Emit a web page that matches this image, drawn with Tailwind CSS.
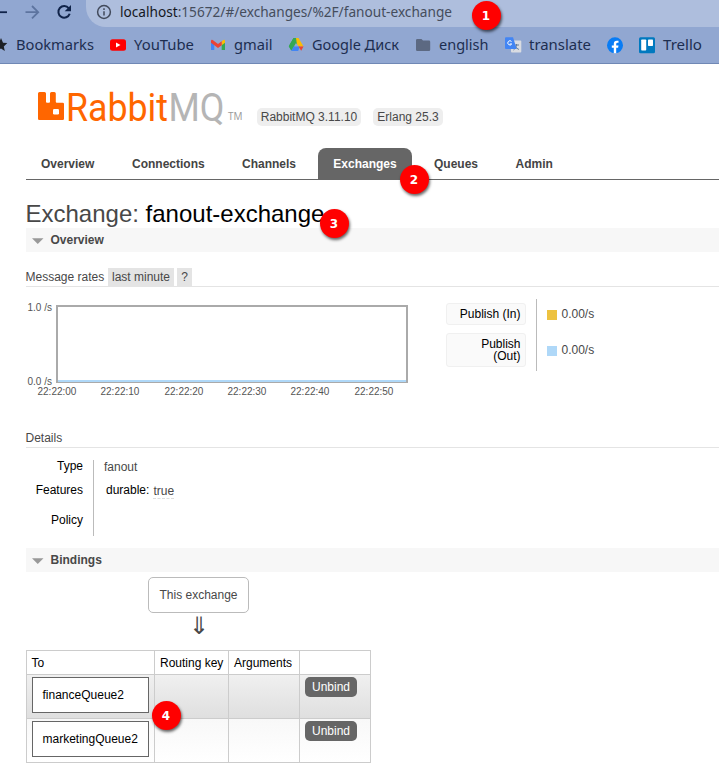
<!DOCTYPE html>
<html lang="en">
<head>
<meta charset="utf-8">
<title>RabbitMQ Management</title>
<script src="https://cdn.jsdelivr.net/npm/@tailwindcss/browser@4"></script>
</head>
<body class="relative h-[776px] w-[719px] overflow-hidden bg-white font-['Liberation_Sans',Arial,sans-serif] text-[12px] leading-[14px] text-[#484848]">
<!-- Browser chrome -->
<header class="h-16 border-b border-[#7088b5] bg-[#91a7d1] font-['Noto_Sans','Open_Sans',sans-serif] text-[#1d2e50]">
  <div class="flex h-[27px]">
    <svg class="h-[27px] w-[86px] shrink-0" viewBox="0 0 86 27" fill="none" stroke-width="1.8">
      <path d="M-6 12.2H7" stroke="#102349"/>
      <path d="M25.5 12.2H38M32 6l6.2 6.2L32 18.4" stroke="#5d749f"/>
      <path d="M68.8 8.3A5.8 5.8 0 1 0 69.7 13.7" stroke="#102349" stroke-width="2"/>
      <path d="M71 5v6.3h-6.3z" fill="#102349"/>
    </svg>
    <div class="flex h-[27px] flex-1 items-start rounded-bl-[20px] bg-[#aebedd]">
      <svg class="mt-[4px] ml-[10px] h-4 w-4" viewBox="0 0 16 16" fill="none" stroke="#424a5b" stroke-width="1.5"><circle cx="8" cy="8" r="6.4"/><path d="M8 7.2v4.2M8 4.3v1.6"/></svg>
      <svg class="h-[27px] w-[340px] ml-2" viewBox="0 0 340 27"><text x="0" y="17.3" font-size="14" textLength="332" lengthAdjust="spacingAndGlyphs" fill="#454d5c"><tspan fill="#15181f">localhost</tspan>:15672/#/exchanges/%2F/fanout-exchange</text></svg>
    </div>
  </div>
  <svg class="h-9 w-[719px]" viewBox="0 27 719 36" font-size="14" fill="#1d2e50">
    <path d="M1 38l2 4.8 4.3.3-3.5 3.3 1 4.6L1 48.5-4 51v-8h3z" fill="#1d2025"/>
    <g>
      <text x="16" y="50" textLength="78" lengthAdjust="spacingAndGlyphs">Bookmarks</text>
      <text x="134" y="50" textLength="60" lengthAdjust="spacingAndGlyphs">YouTube</text>
      <text x="234" y="50" textLength="38.500" lengthAdjust="spacingAndGlyphs">gmail</text>
      <text x="312" y="50" textLength="87" lengthAdjust="spacingAndGlyphs">Google Диск</text>
      <text x="439" y="50" textLength="49.500" lengthAdjust="spacingAndGlyphs">english</text>
      <text x="529" y="50" textLength="62" lengthAdjust="spacingAndGlyphs">translate</text>
      <text x="663" y="50" textLength="39" lengthAdjust="spacingAndGlyphs">Trello</text>
    </g>
    <rect x="110" y="39.300" width="16" height="11.500" rx="2.500" fill="#f00"/><path d="M116 42.500v5l4.500-2.500z" fill="#fff"/>
    <path d="M211 41v9h3.300v-6z" fill="#4285f4"/><path d="M225 41v9h-3.300v-6z" fill="#34a853"/><path d="M221.700 41.200L223.400 40q1.600-.7 1.600 1.200v1.600l-3.300 2.400z" fill="#fbbc04"/><path d="M211 42.800v-1.600q0-1.900 1.700-1.200l5.300 4 3.700-2.800v4l-3.700 2.900z" fill="#ea4335"/>
    <path d="M293.500 38h5l-7.200 12.500-2.500-4.200z" fill="#34a853"/><path d="M293.500 38h5l5 8.500h-5z" fill="#fbbc04"/><path d="M293.500 38h2.500l.8 5.500-5.500 7-2.500-4.200z" fill="#34a853"/><path d="M296 43l2.200 3.500h-4.300z" fill="#91a7d1"/><path d="M293.600 46.500h6l-1.400 4.500h-7z" fill="#4285f4"/><path d="M298.500 46.500h5l-2.300 4.300z" fill="#ea4335"/>
    <path d="M416 40.200q0-1.200 1.200-1.200h4.300l1.500 1.500h6q1.200 0 1.200 1.200v8.100q0 1.200-1.200 1.200h-11.800q-1.200 0-1.200-1.200z" fill="#5c6982"/>
    <rect x="511" y="40.500" width="10.300" height="12" rx="1" fill="#d9dce2"/><path d="M514 45h5M516.500 44v1c0 2-1.500 4-3 5M515 46c1 2 3 3 4 3.500" stroke="#667c98" fill="none"/><path d="M506 37.300h7l3.700 11.700H506q-1 0-1-1V38.300q0-1 1-1z" fill="#4285f4"/><path d="M511.500 41.500a2.100 2.100 0 1 0 .2 2.500h-1.900" fill="none" stroke="#fff"/>
    <circle cx="615" cy="45.300" r="8" fill="#087cf5"/><path d="M613.800 53.300v-5.600h-2v-2.300h2v-1.700q0-3 3-3h1.700v2.100h-1.100q-1.200 0-1.200 1.200v1.400h2.300l-.4 2.300h-1.900v5.600z" fill="#fff"/>
    <rect x="639" y="37.300" width="16" height="16" rx="1.500" fill="#0079bf"/><rect x="641.200" y="39.500" width="5" height="11" rx=".7" fill="#fff"/><rect x="648" y="39.500" width="5" height="6.500" rx=".7" fill="#fff"/>
  </svg>
</header>

<main class="ml-[26px]">
  <!-- Logo and versions -->
  <div class="flex h-[84px] pt-[24px]">
    <svg class="h-10 w-[231px] shrink-0" viewBox="26 88 231 40">
      <path d="M39.500 92h5q1.500 0 1.500 1.500v8.300q0 1 1 1h2q1 0 1-1v-8.300q0-1.500 1.500-1.500h2.800q1.500 0 1.500 1.500v8.300q0 1 1 1h6q1.200 0 1.200 1.200v14.800q0 1.200-1.200 1.200H39.300q-1.300 0-1.300-1.200V93.500q0-1.500 1.500-1.500z" fill="#f60"/>
      <rect x="53" y="109" width="6" height="5.500" rx="1.200" fill="#fff"/>
      <text x="66" y="120.500" font-family="Roboto,'Open Sans',sans-serif" font-size="38.500" textLength="102" lengthAdjust="spacingAndGlyphs" fill="#f60">Rabbit</text>
      <text x="168.500" y="120.500" font-family="Roboto,'Open Sans',sans-serif" font-size="38.500" textLength="56" lengthAdjust="spacingAndGlyphs" fill="#b5b5b5">MQ</text>
      <text x="228" y="120.300" font-family="'Open Sans',sans-serif" font-size="10" textLength="14.500" lengthAdjust="spacingAndGlyphs" fill="#999">TM</text>
    </svg>
    <div class="flex items-start gap-3 pt-5">
      <span class="h-[18px] w-[104px] rounded-[5px] bg-[#eee] pt-0.5 text-center whitespace-nowrap">RabbitMQ 3.11.10</span>
      <span class="h-[18px] w-[70px] rounded-[5px] bg-[#eee] pt-0.5 text-center whitespace-nowrap">Erlang 25.3</span>
    </div>
  </div>
  <nav class="flex h-8 border-b border-[#666] font-bold text-[#444]">
    <a class="w-[91px] pt-[9px] pl-[15px]">Overview</a>
    <a class="w-[110px] pt-[9px] pl-[15px]">Connections</a>
    <a class="w-[91px] pt-[9px] pl-[15px]">Channels</a>
    <a class="w-[94px] rounded-t-[8px] bg-[#666] pt-[9px] text-center text-white">Exchanges</a>
    <a class="w-[88px] pt-[9px] pl-[22px]">Queues</a>
    <a class="pt-[9px] pl-[15.500px]">Admin</a>
  </nav>
  <h1 class="-ml-[0.500px] h-12 pt-5 text-[24px] leading-7 whitespace-nowrap">Exchange: <span class="text-black">fanout-exchange</span></h1>

  <h2 class="flex h-6 items-center gap-[7px] bg-[#f7f7f7] pl-1.5 font-bold"><svg class="mt-px h-1.5 w-[11.500px]" viewBox="0 0 12 6"><path d="M0 0h12L6 6z" fill="#999"/></svg>Overview</h2>
  <h3 class="mt-4 flex h-[19px] border-b border-[#e4e4e4] leading-[18px]">
    <span class="-ml-[0.500px] w-[82.500px]">Message rates</span><span class="w-[66px] bg-[#e4e4e4] text-center">last minute</span><span class="ml-[3px] w-[15px] bg-[#e4e4e4] text-center">?</span>
  </h3>

  <div class="flex h-[143px]">
    <div class="w-[420px] pt-[18px] text-[10px] leading-3 text-[#545454]">
      <div class="flex h-[78px]">
        <div class="-mt-[3px] flex h-[86px] w-[30px] flex-col justify-between pr-1 text-right whitespace-nowrap"><span>1.0 /s</span><span>0.0 /s</span></div>
        <div class="flex w-[352px] items-end border-2 border-b border-[#aaa]"><div class="h-0.5 w-full bg-[#afd8f8]"></div></div>
      </div>
      <div class="ml-[-0.500px] flex pt-[3px]"><span class="w-[63px] pl-3">22:22:00</span><span class="w-[64px] pl-3">22:22:10</span><span class="w-[63px] pl-3">22:22:20</span><span class="w-[63px] pl-3">22:22:30</span><span class="w-[64px] pl-3">22:22:40</span><span class="pl-3">22:22:50</span></div>
    </div>
    <div class="mt-3 flex h-[72px]">
      <div class="w-[90px] pt-1 text-right leading-3 text-black">
        <div class="h-[22px] w-20 rounded-[3px] border border-[#f0f0f0] bg-[#fafafa] pt-1 pr-[4.500px]">Publish (In)</div>
        <div class="mt-2 h-[34px] w-20 rounded-[3px] border border-[#f0f0f0] bg-[#fafafa] pt-1 pr-[4.500px]">Publish<br>(Out)</div>
      </div>
      <div class="border-l border-[#bbb] pl-[10px]">
        <div class="flex h-[22px] items-center gap-[4.500px] pt-2"><i class="mt-[2px] h-[10px] w-[10px] bg-[#edc240]"></i>0.00/s</div>
        <div class="mt-3.5 flex h-[22px] items-center gap-[4.500px] pt-2"><i class="mt-[2px] h-[10px] w-[10px] bg-[#afd8f8]"></i>0.00/s</div>
      </div>
    </div>
  </div>

  <h3 class="h-[18px] border-b border-[#e4e4e4] pt-px"><span class="-ml-[0.500px]">Details</span></h3>
  <div class="mt-3 flex h-[76px]">
    <div class="w-[68px] border-r border-[#bbb] pr-[10px] text-right text-black"><div class="h-6 -mt-px">Type</div><div class="h-[30px]">Features</div><div>Policy</div></div>
    <div class="pl-[10px]"><div class="h-6">fanout</div><div class="flex gap-[4px] pl-[2px]"><span class="-mt-px text-black">durable:</span><span class="h-[15px] border-b border-dashed border-[#ddd]">true</span></div></div>
  </div>

  <h2 class="mt-3 flex h-6 items-center gap-[7px] bg-[#f7f7f7] pl-1.5 font-bold"><svg class="mt-px h-1.5 w-[11.500px]" viewBox="0 0 12 6"><path d="M0 0h12L6 6z" fill="#999"/></svg>Bindings</h2>
  <div class="mt-[5px] flex h-[73px] w-[345px] flex-col items-center">
    <div class="h-9 w-[101px] rounded-[5px] border border-[#bbb] pt-[10px] text-center">This exchange</div>
    <div class="pt-[1px] text-[24px] leading-[24px]">⇓</div>
  </div>
  <div class="grid w-[345px] grid-cols-[128px_74px_71px_71px] grid-rows-[24px_44px_44px] border-t border-l border-[#ccc] text-black *:border-r *:border-b *:border-[#ccc]">
    <div class="pt-[5px] pl-[4.500px]">To</div><div class="pt-[5px] pl-[5px]">Routing key</div><div class="pt-[5px] pl-[5px]">Arguments</div><div></div>
    <div class="bg-linear-to-b from-[#f0f0f0] to-[#dfdfdf] pt-[2px] pl-[5px]"><div class="h-9 w-[117px] border border-[#666] bg-white pt-[10px] pl-[9.500px]">financeQueue2</div></div>
    <div class="bg-linear-to-b from-[#f0f0f0] to-[#dfdfdf]"></div><div class="bg-linear-to-b from-[#f0f0f0] to-[#dfdfdf]"></div>
    <div class="bg-linear-to-b from-[#f0f0f0] to-[#dfdfdf] pt-[2px] pl-[5px]"><button class="block h-5 w-[52px] rounded-[5px] bg-[#666] text-center text-white">Unbind</button></div>
    <div class="bg-linear-to-b from-[#f8f8f8] to-white pt-[2px] pl-[5px]"><div class="h-9 w-[117px] border border-[#666] bg-white pt-[10px] pl-[9.500px]">marketingQueue2</div></div>
    <div class="bg-linear-to-b from-[#f8f8f8] to-white"></div><div class="bg-linear-to-b from-[#f8f8f8] to-white"></div>
    <div class="bg-linear-to-b from-[#f8f8f8] to-white pt-[2px] pl-[5px]"><button class="block h-5 w-[52px] rounded-[5px] bg-[#666] text-center text-white">Unbind</button></div>
  </div>
</main>

<!-- Step markers -->
<div class="font-['DejaVu_Sans',sans-serif] text-[12px] font-bold text-white *:absolute *:h-[29px] *:w-[29px] *:rounded-full *:bg-[#f00] *:text-center *:leading-[30px] *:shadow-[1px_2px_3px_rgba(0,0,0,0.6)]">
  <span class="top-[1px] left-[471.500px]">1</span><span class="top-[164.500px] left-[399.500px]">2</span><span class="top-[208.500px] left-[319.500px]">3</span><span class="top-[700.500px] left-[151.500px]">4</span>
</div>
</body>
</html>
